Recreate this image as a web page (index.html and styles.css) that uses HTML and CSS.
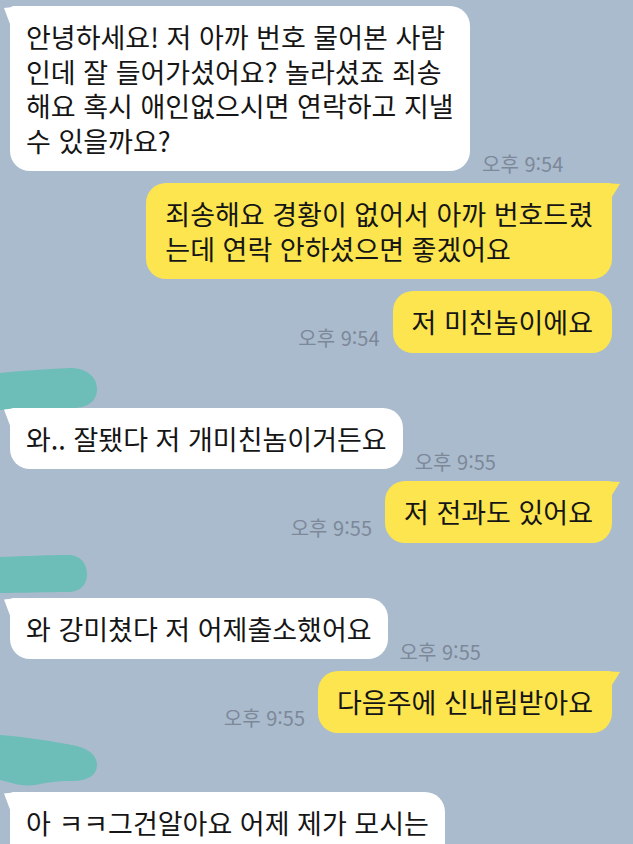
FILE: index.html
```html
<!DOCTYPE html>
<html lang="ko">
<head>
<meta charset="utf-8">
<title>채팅</title>
<link rel="stylesheet" href="styles.css">
</head>
<body>
<main class="chat">
  <div class="row in">
    <div class="bubble in tail wide">안녕하세요! 저 아까 번호 물어본 사람<br>인데 잘 들어가셨어요? 놀라셨죠 죄송<br>해요 혹시 애인없으시면 연락하고 지낼<br>수 있을까요?</div>
    <span class="time">오후 9:54</span>
  </div>
  <div class="row out">
    <div class="bubble out tail">죄송해요 경황이 없어서 아까 번호드렸<br>는데 연락 안하셨으면 좋겠어요</div>
  </div>
  <div class="row out">
    <span class="time">오후 9:54</span>
    <div class="bubble out">저 미친놈이에요</div>
  </div>

  <div class="name name-1">
    <svg width="100" height="42" viewBox="0 0 100 42"><path d="M0,5 C20,3 45,1 70,0 C88,0 97,10 97,21 C97,33 88,40 72,40 C50,40 25,41 0,42 Z"/></svg>
  </div>
  <div class="row in">
    <div class="bubble in tail">와.. 잘됐다 저 개미친놈이거든요</div>
    <span class="time">오후 9:55</span>
  </div>
  <div class="row out">
    <span class="time">오후 9:55</span>
    <div class="bubble out tail">저 전과도 있어요</div>
  </div>

  <div class="name name-2">
    <svg width="90" height="38" viewBox="0 0 90 38"><path d="M0,2 C25,1 50,0 68,0 C80,0 87,8 87,19 C87,30 80,37 68,37 C45,37 20,38 0,38 Z"/></svg>
  </div>
  <div class="row in">
    <div class="bubble in tail">와 강미쳤다 저 어제출소했어요</div>
    <span class="time">오후 9:55</span>
  </div>
  <div class="row out">
    <span class="time">오후 9:55</span>
    <div class="bubble out tail">다음주에 신내림받아요</div>
  </div>

  <div class="name name-3">
    <svg width="100" height="52" viewBox="0 0 100 52"><path d="M0,0 C25,2 50,6 72,10 C88,13 97,20 97,30 C97,40 88,46 72,46 C55,46 45,48 35,50 C20,52 10,47 0,45 Z"/></svg>
  </div>
  <div class="row in">
    <div class="bubble in tail">아 ㅋㅋ그건알아요 어제 제가 모시는<br>신령님이 다 알려주셨어요</div>
  </div>
</main>
</body>
</html>
```

FILE: styles.css
```css
* {
  box-sizing: border-box;
}

html,
body {
  margin: 0;
  padding: 0;
}

body {
  width: 633px;
  height: 844px;
  overflow: hidden;
  background: #aabbce;
  font-family: "Noto Sans CJK KR", "Noto Sans", sans-serif;
  color: #151515;
}

.chat {
  display: flex;
  flex-direction: column;
  gap: 12px;
  padding-top: 6px;
}

.row {
  display: flex;
  align-items: flex-end;
}

.row.in {
  padding-left: 10px;
  gap: 12px;
}

.row.out {
  justify-content: flex-end;
  padding-right: 21px;
  gap: 13px;
}

.bubble {
  position: relative;
  font-size: 27px;
  line-height: 34.5px;
  padding: 14px 16px 13px;
  border-radius: 20px;
  white-space: nowrap;
}

.bubble.in {
  background: #ffffff;
}

.bubble.out {
  background: #fce54e;
  padding-left: 19px;
  padding-right: 19px;
}

.bubble.wide {
  width: 460px;
}

.bubble.in.tail {
  border-top-left-radius: 4px;
}

.bubble.out.tail {
  border-top-right-radius: 4px;
}

.bubble.tail::before {
  content: "";
  position: absolute;
  top: 0;
  width: 18px;
  height: 18px;
}

.bubble.in.tail::before {
  left: -6px;
  background: #ffffff;
  clip-path: polygon(0 2px, 100% 0, 100% 100%, 6px 100%);
}

.bubble.out.tail::before {
  right: -8px;
  background: #fce54e;
  clip-path: polygon(0 0, 100% 1px, 10px 14px, 0 100%);
}

.time {
  font-size: 20px;
  line-height: 20px;
  color: #7d8898;
  white-space: nowrap;
}

.row.in .time {
  margin-bottom: -3px;
}

.row.out .time {
  margin-bottom: 5px;
}

.name svg {
  display: block;
  fill: #6dbdb8;
}

.name-1 {
  margin-top: 3px;
  margin-bottom: -14px;
}

.name-2 {
  margin-bottom: -7px;
}

.name-3 {
  margin-top: -10px;
  margin-bottom: -7px;
}
```
